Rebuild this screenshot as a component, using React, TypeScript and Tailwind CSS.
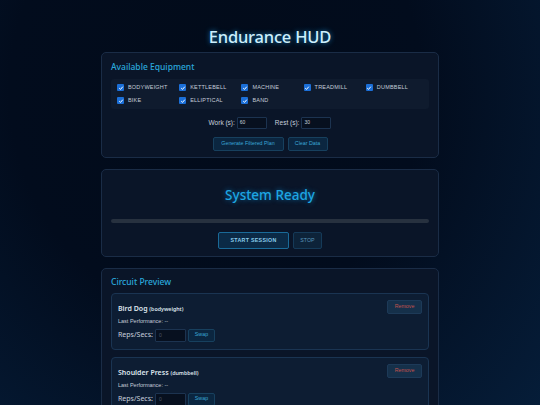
const equipment = [
  "BODYWEIGHT",
  "KETTLEBELL",
  "MACHINE",
  "TREADMILL",
  "DUMBBELL",
  "BIKE",
  "ELLIPTICAL",
  "BAND",
];

const circuit = [
  { name: "Bird Dog", type: "bodyweight" },
  { name: "Shoulder Press", type: "dumbbell" },
];

const head = { fontFamily: '"Noto Sans", "DejaVu Sans", sans-serif' };
const body = { fontFamily: '"Liberation Sans", Arial, sans-serif' };

const Check = () => (
  <span className="w-[7px] h-[7px] rounded-[1px] bg-[#1b6fd8] flex items-center justify-center">
    <svg viewBox="0 0 10 10" className="w-[6px] h-[6px]">
      <path d="M2 5.2 L4.2 7.3 L8 2.8" fill="none" stroke="#fff" strokeWidth="1.6" />
    </svg>
  </span>
);

export default function App() {
  return (
    <div
      className="min-h-screen w-full bg-[radial-gradient(ellipse_at_40%_20%,#020b1a_0%,#020c1d_45%,#061f3c_100%)] pt-[26px] pb-6"
      style={body}
    >
      <div className="w-[338px] mx-auto">
        <h1
          className="text-center text-[16.5px] leading-[22px] font-medium tracking-[-0.2px] text-[#cdeffc] [text-shadow:0_0_5px_#1a80c0]"
          style={head}
        >
          Endurance HUD
        </h1>

        {/* Equipment */}
        <div className="mt-[4px] h-[106px] rounded-[5px] border border-[#1a2c46] bg-[#0a1528] px-[9px] pt-[8px]">
          <h2 className="text-[8.5px] leading-[12px] font-medium text-[#2aa8dc]" style={head}>
            Available Equipment
          </h2>
          <div className="mt-[6px] rounded-[3px] bg-[#0f1b2e] pl-[6px] pr-[1px] py-[4px] grid grid-cols-5 gap-y-[4px]">
            {equipment.map((e) => (
              <label key={e} className="flex items-center gap-[4px] h-[9px]">
                <Check />
                <span className="text-[5.5px] text-[#c4ccd8] tracking-[0.2px]">{e}</span>
              </label>
            ))}
          </div>
          <div className="mt-[8px] flex justify-center items-center gap-[8px] text-[6.5px] text-[#c8d0dc]">
            <div className="flex items-center gap-[2px]">
              <span>Work (s):</span>
              <div className="w-[30px] h-[12px] border border-[#1c3350] bg-[#07101f] rounded-[1px] px-[2px] flex items-center text-[5px] text-[#c8d0dc]">
                60
              </div>
            </div>
            <div className="flex items-center gap-[2px]">
              <span>Rest (s):</span>
              <div className="w-[30px] h-[12px] border border-[#1c3350] bg-[#07101f] rounded-[1px] px-[2px] flex items-center text-[5px] text-[#c8d0dc]">
                30
              </div>
            </div>
          </div>
          <div className="mt-[8px] flex justify-center gap-[4px]">
            <button className="h-[14px] w-[71px] rounded-[2px] border border-[#17405e] bg-[#0b2640] text-[5.3px] text-[#3aa6d6]">
              Generate Filtered Plan
            </button>
            <button className="h-[14px] w-[40px] rounded-[2px] border border-[#17405e] bg-[#0b2640] text-[5.3px] text-[#3aa6d6]">
              Clear Data
            </button>
          </div>
        </div>

        {/* Status */}
        <div className="mt-[11px] h-[88px] rounded-[5px] border border-[#1a2c46] bg-[#0a1528] px-[9px] pt-[16px]">
          <h2
            className="text-center text-[13.5px] leading-[18px] font-medium text-[#1ea6e2] [text-shadow:0_0_5px_#0d6ea8]"
            style={head}
          >
            System Ready
          </h2>
          <div className="mt-[15px] h-[4px] rounded-full bg-[#27313f]" />
          <div className="mt-[9px] flex justify-center gap-[4px]">
            <button className="h-[17px] w-[71px] rounded-[2px] border border-[#1a6a98] bg-[#0b2a46] text-[5.3px] font-bold tracking-[0.3px] text-[#8acdec]">
              START SESSION
            </button>
            <button className="h-[17px] w-[29px] rounded-[2px] border border-[#153a58] bg-[#0d2339] text-[5.3px] text-[#5a96bc]">
              STOP
            </button>
          </div>
        </div>

        {/* Circuit */}
        <div className="mt-[11px] rounded-[5px] border border-[#1a2c46] bg-[#0a1528] px-[9px] pt-[7px] pb-[9px]">
          <h2 className="text-[8.5px] leading-[12px] font-medium text-[#2aa8dc]" style={head}>
            Circuit Preview
          </h2>
          <div className="mt-[5px] flex flex-col gap-[7px]">
            {circuit.map((c) => (
              <div
                key={c.name}
                className="h-[57px] rounded-[4px] border border-[#1a3452] bg-[#0d1d33] px-[6px] pt-[6px]"
              >
                <div className="flex justify-between items-start">
                  <div className="pt-[4px] text-[7px] font-semibold text-[#dfe6ee]" style={head}>
                    {c.name} <span className="text-[5.3px] font-semibold">({c.type})</span>
                  </div>
                  <button className="h-[14px] w-[35px] mr-[0px] rounded-[2px] border border-[#1d3a58] bg-[#15304a] text-[5.3px] text-[#c0524e]">
                    Remove
                  </button>
                </div>
                <div className="mt-[2px] text-[5.5px] text-[#c4ccd8]">Last Performance: --</div>
                <div className="mt-[4px] flex items-center gap-[2px]">
                  <span className="text-[7px] text-[#c8d0dc]" style={head}>
                    Reps/Secs:
                  </span>
                  <div className="w-[31px] h-[13px] border border-[#1c3350] bg-[#07101f] rounded-[1px] px-[3px] flex items-center text-[5px] text-[#4a5668]">
                    0
                  </div>
                  <button className="h-[13px] w-[27px] rounded-[2px] border border-[#17405e] bg-[#0b2640] text-[5.3px] text-[#3aa6d6]">
                    Swap
                  </button>
                </div>
              </div>
            ))}
          </div>
        </div>
      </div>
    </div>
  );
}
